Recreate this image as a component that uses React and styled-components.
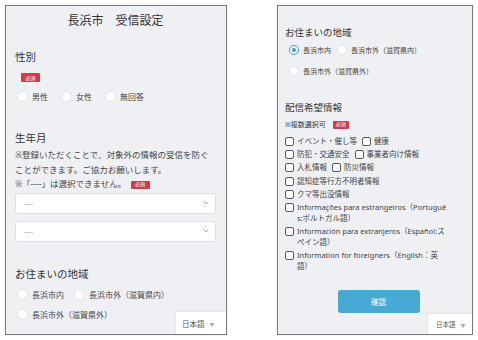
import styled, { createGlobalStyle } from 'styled-components';

const GlobalStyle = createGlobalStyle`
  html, body {
    margin: 0;
    padding: 0;
    background: #ffffff;
  }
  body {
    font-family: "Noto Sans", "Noto Sans CJK JP", sans-serif;
    color: #3f3f3f;
  }
`;

const Page = styled.div`
  display: flex;
  align-items: flex-start;
  gap: 50px;
  width: 478px;
  height: 340px;
  padding: 5px 0 0 5px;
  box-sizing: border-box;
`;

const Screen = styled.div`
  position: relative;
  box-sizing: border-box;
  width: ${(p) => p.$w}px;
  height: 330px;
  border: 1px solid #7b7b7b;
  background: #eff0f4;
  overflow: hidden;
  padding: ${(p) => p.$pad};
  box-shadow: 0 0 2px rgba(0, 0, 0, 0.15);
`;

const Title = styled.div`
  font-size: 12px;
  line-height: 16px;
  text-align: center;
  color: #333;
`;

const Heading = styled.div`
  font-size: ${(p) => p.$size}px;
  line-height: ${(p) => p.$lh}px;
  margin-top: ${(p) => p.$mt}px;
  color: #333;
`;

const Badge = styled.span`
  display: inline-flex;
  align-items: center;
  justify-content: center;
  width: ${(p) => p.$w}px;
  height: ${(p) => p.$h}px;
  background: #d43a4c;
  color: #fff;
  font-size: 5px;
  border-radius: 1px;
  vertical-align: middle;
`;

const BadgeRow = styled.div`
  display: flex;
  margin-top: ${(p) => p.$mt}px;
  padding-left: ${(p) => p.$indent}px;
`;

const RadioRow = styled.div`
  display: flex;
  align-items: center;
  gap: ${(p) => p.$gap}px;
  margin-top: ${(p) => p.$mt}px;
  padding-left: ${(p) => p.$indent}px;
  font-size: ${(p) => p.$size}px;
`;

const RadioItem = styled.label`
  display: flex;
  align-items: center;
  gap: 4px;
  color: #444;
  line-height: 1;
`;

const Circle = styled.span`
  box-sizing: border-box;
  width: ${(p) => p.$d}px;
  height: ${(p) => p.$d}px;
  border-radius: 50%;
  background: #fff;
  border: 1px solid ${(p) => (p.$on ? '#3d9ad6' : '#e1e3e8')};
  display: flex;
  align-items: center;
  justify-content: center;

  &::after {
    content: '';
    display: ${(p) => (p.$on ? 'block' : 'none')};
    width: 4px;
    height: 4px;
    border-radius: 50%;
    background: #3d9ad6;
  }
`;

const Note = styled.p`
  margin: 3px 0 0;
  font-size: 8.5px;
  line-height: 14.5px;
  color: #444;
`;

const SelectBox = styled.div`
  box-sizing: border-box;
  display: flex;
  align-items: center;
  justify-content: space-between;
  height: 21px;
  margin-top: ${(p) => p.$mt}px;
  padding: 0 6px 0 8px;
  background: #fff;
  border: 1px solid #dcdee3;
  border-radius: 3px;
  font-size: 7px;
  color: #9a9a9a;
`;

const CheckList = styled.div`
  display: flex;
  flex-direction: column;
  gap: 2.9px;
  margin-top: 6px;
  padding-right: 23px;
  font-size: 7.5px;
  line-height: 10.5px;
`;

const CheckRow = styled.div`
  display: flex;
  gap: 5px;
`;

const CheckItem = styled.label`
  display: flex;
  align-items: flex-start;
  gap: 3px;
  color: #444;
`;

const Box = styled.span`
  flex: none;
  box-sizing: border-box;
  width: 9px;
  height: 9px;
  margin-top: 1px;
  background: #fff;
  border: 1px solid #5a5a5a;
  border-radius: 2px;
`;

const CheckText = styled.span`
  word-break: break-all;
`;

const ButtonWrap = styled.div`
  display: flex;
  justify-content: center;
  margin-top: 19px;
`;

const Button = styled.button`
  width: 82px;
  height: 23px;
  border: none;
  border-radius: 3px;
  background: #47a9d6;
  color: #fff;
  font-family: inherit;
  font-size: 7.5px;
`;

const LangBox = styled.div`
  position: absolute;
  right: 0;
  bottom: 0;
  display: flex;
  align-items: center;
  gap: 5px;
  box-sizing: border-box;
  width: ${(p) => p.$w}px;
  height: ${(p) => p.$h}px;
  padding-left: ${(p) => p.$pl}px;
  background: #fff;
  font-size: ${(p) => p.$size}px;
  color: #555;
  box-shadow: -1px -1px 2px rgba(0, 0, 0, 0.06);

  span {
    font-size: 5px;
    color: #aaa;
  }
`;

const Chevron = () => (
  <svg width="6" height="4" viewBox="0 0 6 4">
    <path d="M0.5 0.5 L3 3 L5.5 0.5" fill="none" stroke="#9a9a9a" strokeWidth="0.8" />
  </svg>
);

function Radio({ d, on, children }) {
  return (
    <RadioItem>
      <Circle $d={d} $on={on} />
      {children}
    </RadioItem>
  );
}

function Check({ children }) {
  return (
    <CheckItem>
      <Box />
      <CheckText>{children}</CheckText>
    </CheckItem>
  );
}

export default function App() {
  return (
    <>
      <GlobalStyle />
      <Page>
        {/* left screen */}
        <Screen $w={222} $pad="7px 10px 0 9px">
          <Title>長浜市　受信設定</Title>

          <Heading $size={10.5} $lh={14} $mt={21}>性別</Heading>
          <BadgeRow $mt={9} $indent={6}>
            <Badge $w={19} $h={9}>必須</Badge>
          </BadgeRow>
          <RadioRow $mt={9} $gap={13} $indent={2} $size={8}>
            <Radio d={11}>男性</Radio>
            <Radio d={11}>女性</Radio>
            <Radio d={11}>無回答</Radio>
          </RadioRow>

          <Heading $size={10.5} $lh={14} $mt={29}>生年月</Heading>
          <Note>
            ※登録いただくことで、対象外の情報の受信を防ぐことができます。ご協力お願いします。
            <br />
            ※「----」は選択できません。　<Badge $w={19} $h={8}>必須</Badge>
          </Note>
          <SelectBox $mt={1}>
            ----
            <Chevron />
          </SelectBox>
          <SelectBox $mt={7}>
            ----
            <Chevron />
          </SelectBox>

          <Heading $size={10.5} $lh={14} $mt={25}>お住まいの地域</Heading>
          <RadioRow $mt={8.5} $gap={10} $indent={2} $size={8}>
            <Radio d={11}>長浜市内</Radio>
            <Radio d={11}>長浜市外（滋賀県内）</Radio>
          </RadioRow>
          <RadioRow $mt={9} $gap={10} $indent={2} $size={8}>
            <Radio d={11}>長浜市外（滋賀県外）</Radio>
          </RadioRow>

          <LangBox $w={50} $h={22} $pl={6} $size={7.5}>
            日本語 <span>▼</span>
          </LangBox>
        </Screen>

        {/* right screen */}
        <Screen $w={196} $pad="19.5px 0 0 7px">
          <Heading $size={9.5} $lh={13} $mt={0}>お住まいの地域</Heading>
          <RadioRow $mt={6.5} $gap={6} $indent={4} $size={7}>
            <Radio d={10} on>長浜市内</Radio>
            <Radio d={10}>長浜市外（滋賀県内）</Radio>
          </RadioRow>
          <RadioRow $mt={11} $gap={6} $indent={4} $size={7}>
            <Radio d={10}>長浜市外（滋賀県外）</Radio>
          </RadioRow>

          <Heading $size={9.5} $lh={13} $mt={24.5}>配信希望情報</Heading>
          <Heading $size={7} $lh={11} $mt={5}>
            ※複数選択可　<Badge $w={16} $h={8}>必須</Badge>
          </Heading>

          <CheckList>
            <CheckRow>
              <Check>イベント・催し等</Check>
              <Check>健康</Check>
            </CheckRow>
            <CheckRow>
              <Check>防犯・交通安全</Check>
              <Check>事業者向け情報</Check>
            </CheckRow>
            <CheckRow>
              <Check>入札情報</Check>
              <Check>防災情報</Check>
            </CheckRow>
            <Check>認知症等行方不明者情報</Check>
            <Check>クマ等出没情報</Check>
            <Check>Informações para estrangeiros（Português:ポルトガル語）</Check>
            <Check>Información para extranjeros（Español:スペイン語）</Check>
            <Check>Information for foreigners（English：英語）</Check>
          </CheckList>

          <ButtonWrap>
            <Button>確認</Button>
          </ButtonWrap>

          <LangBox $w={44} $h={20} $pl={8} $size={6.5}>
            日本語 <span>▼</span>
          </LangBox>
        </Screen>
      </Page>
    </>
  );
}
